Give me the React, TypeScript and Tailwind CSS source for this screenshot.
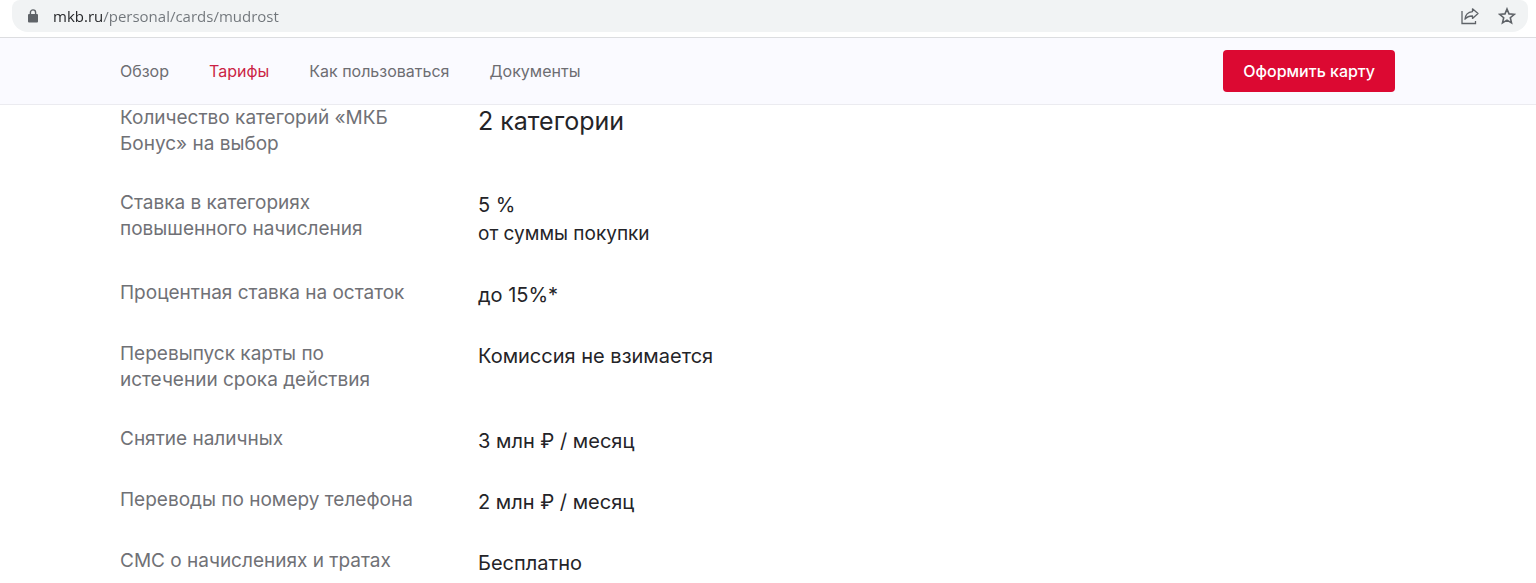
import type { ReactNode } from "react";
import clsx from "clsx";

interface Tariff {
  label: string;
  value: ReactNode;
  large?: boolean;
}

const navItems = [
  { title: "Обзор", href: "#overview" },
  { title: "Тарифы", href: "#tariffs", active: true },
  { title: "Как пользоваться", href: "#usage" },
  { title: "Документы", href: "#documents" },
];

const tariffs: Tariff[] = [
  { label: "Количество категорий «МКБ Бонус» на выбор", value: "2 категории", large: true },
  {
    label: "Ставка в категориях повышенного начисления",
    value: (
      <>
        5 %<span className="block text-[19px] leading-[29px]">от суммы покупки</span>
      </>
    ),
  },
  { label: "Процентная ставка на остаток", value: "до 15%*" },
  { label: "Перевыпуск карты по истечении срока действия", value: "Комиссия не взимается" },
  { label: "Снятие наличных", value: "3 млн ₽ / месяц" },
  { label: "Переводы по номеру телефона", value: "2 млн ₽ / месяц" },
  { label: "СМС о начислениях и тратах", value: "Бесплатно" },
];

const LockIcon = () => (
  <svg viewBox="0 0 12 14" className="h-[14px] w-3 shrink-0" fill="none" aria-hidden="true">
    <rect x="1" y="5" width="10" height="8.5" rx="1" fill="#5f6368" />
    <path d="M3.4 5.5V3.5a2.6 2.6 0 0 1 5.2 0v2" stroke="#5f6368" strokeWidth="1.4" />
  </svg>
);

const ShareIcon = () => (
  <svg viewBox="0 0 20 18" className="h-[18px] w-5" fill="none" stroke="#5f6368" strokeWidth="1.3" aria-hidden="true">
    <path d="M2 4v12.500h13.500V14" />
    <path d="M12.500 1.800 18 6.600l-5.500 4.800V9c-3.300-.1-5.500.8-7.500 3.200.3-4 3-7.100 7.500-7.600z" strokeLinejoin="round" />
  </svg>
);

const StarIcon = () => (
  <svg viewBox="0 0 18 18" className="size-[18px]" fill="none" stroke="#5f6368" strokeWidth="1.6" aria-hidden="true">
    <path d="m9 2 2 4.900 5.300.4-4 3.400 1.200 5.200L9 13.100l-4.500 2.800 1.200-5.200-4-3.400L7 6.900z" />
  </svg>
);

const AddressBar = () => (
  <div className="flex h-[37px] items-start bg-white pl-3 pr-2">
    <div className="flex h-8 flex-1 items-center rounded-b-2xl rounded-t-lg bg-[#f1f3f4] pl-[15px] pr-3">
      <LockIcon />
      <input
        type="text"
        aria-label="Адрес страницы"
        defaultValue="mkb.ru/personal/cards/mudrost"
        className="ml-[14px] h-7 min-w-0 flex-1 bg-[linear-gradient(to_right,#202124_49px,#70757a_49px)] bg-clip-text font-['Open_Sans','Noto_Sans',sans-serif] text-[15px] text-transparent caret-[#202124] outline-none"
      />
      <button type="button" aria-label="Поделиться" className="ml-4">
        <ShareIcon />
      </button>
      <button type="button" aria-label="Добавить в закладки" className="ml-[18px]">
        <StarIcon />
      </button>
    </div>
  </div>
);

const Header = () => (
  <header className="sticky top-0 flex h-[68px] items-center justify-between border-y border-t-[#dcdde0] border-b-[#ebebf0] bg-[#fafaff] pl-[120px] pr-[141px]">
    <nav className="flex gap-10 text-base leading-5">
      {navItems.map((item) => (
        <a key={item.href} href={item.href} className={clsx(item.active ? "text-[#cb1f45]" : "text-[#6d6d72]")}>
          {item.title}
        </a>
      ))}
    </nav>
    <button type="button" className="h-[42px] rounded-[4px] bg-[#dc0932] px-5 text-base font-medium text-white">
      Оформить карту
    </button>
  </header>
);

const TariffTable = () => (
  <table className="w-full table-fixed text-left">
    <tbody>
      {tariffs.map((tariff) => (
        <tr key={tariff.label} className="group align-top">
          <th
            scope="row"
            className="w-[358px] pb-[33px] pr-14 text-[19px] leading-[26px] font-normal text-[#707176] group-last:pb-0"
          >
            {tariff.label}
          </th>
          <td
            className={clsx(
              "pt-px pb-8 text-[#242428] group-last:pb-0",
              tariff.large ? "text-[25px] leading-[30px]" : "text-xl leading-[28px]"
            )}
          >
            {tariff.value}
          </td>
        </tr>
      ))}
    </tbody>
  </table>
);

export default function App() {
  return (
    <div className="bg-white font-['Inter','Noto_Sans',sans-serif]">
      <AddressBar />
      <Header />
      <main className="pl-[120px] pr-[141px]">
        <TariffTable />
      </main>
    </div>
  );
}
